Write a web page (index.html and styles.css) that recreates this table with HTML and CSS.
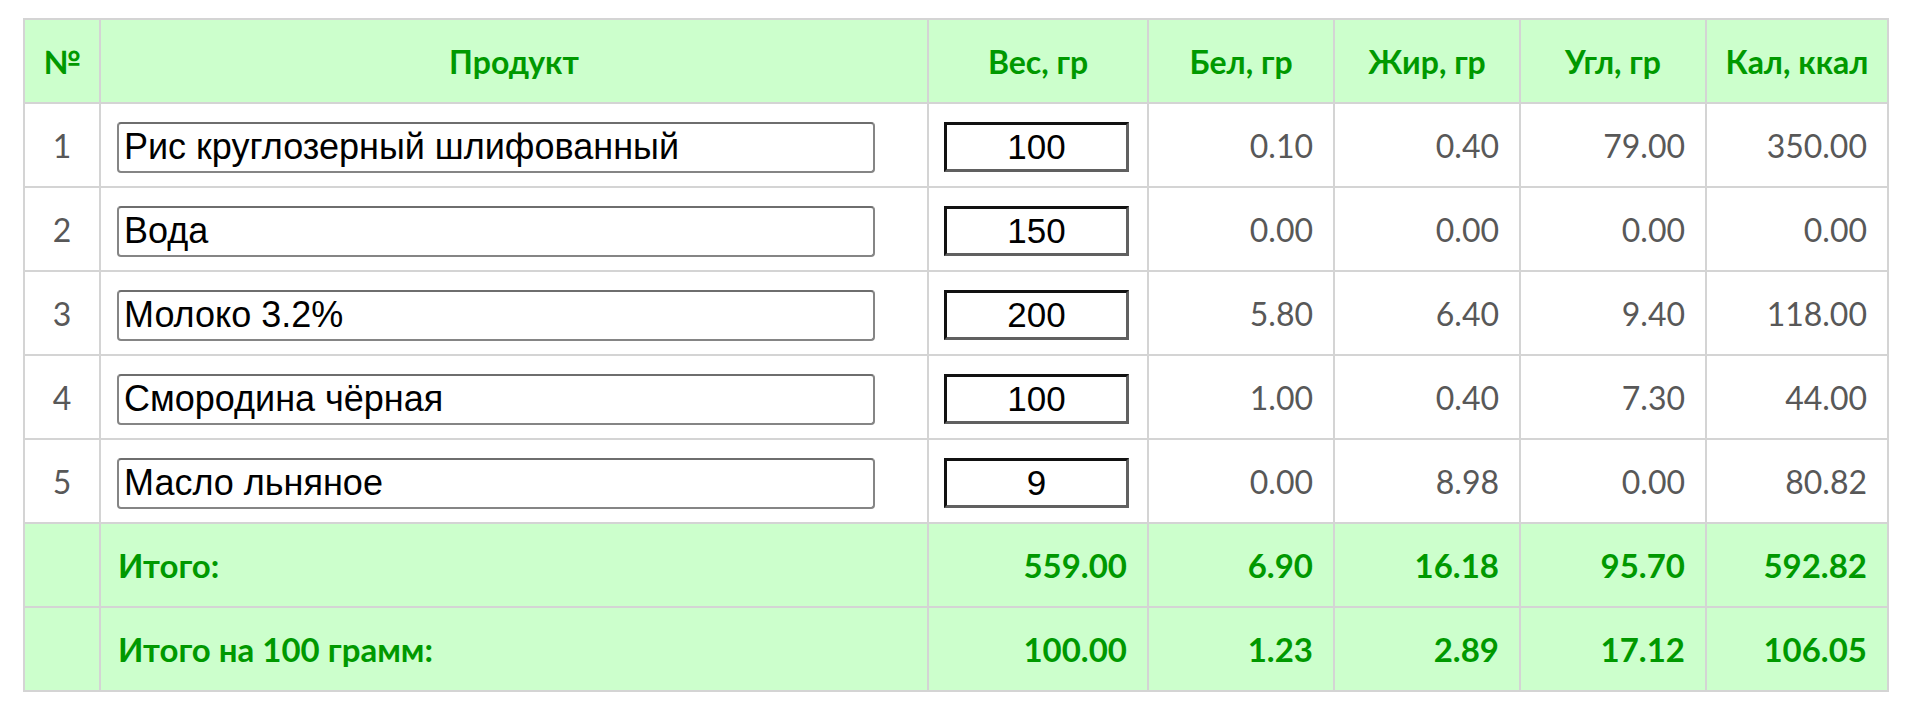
FILE: index.html
```html
<!DOCTYPE html>
<html lang="ru">
<head>
<meta charset="utf-8">
<title>Калькулятор калорийности</title>
<link rel="stylesheet" href="styles.css">
</head>
<body>
<table class="calc">
  <colgroup>
    <col class="c-num">
    <col class="c-prod">
    <col class="c-weight">
    <col class="c-val">
    <col class="c-val">
    <col class="c-val">
    <col class="c-last">
  </colgroup>
  <thead>
    <tr class="head">
      <th>№</th>
      <th>Продукт</th>
      <th>Вес, гр</th>
      <th>Бел, гр</th>
      <th>Жир, гр</th>
      <th>Угл, гр</th>
      <th>Кал, ккал</th>
    </tr>
  </thead>
  <tbody>
    <tr class="item">
      <td class="idx">1</td>
      <td class="prod"><input class="prod-input" type="text" value="Рис круглозерный шлифованный"></td>
      <td class="weight"><input class="weight-input" type="text" value="100"></td>
      <td class="num">0.10</td>
      <td class="num">0.40</td>
      <td class="num">79.00</td>
      <td class="num">350.00</td>
    </tr>
    <tr class="item">
      <td class="idx">2</td>
      <td class="prod"><input class="prod-input" type="text" value="Вода"></td>
      <td class="weight"><input class="weight-input" type="text" value="150"></td>
      <td class="num">0.00</td>
      <td class="num">0.00</td>
      <td class="num">0.00</td>
      <td class="num">0.00</td>
    </tr>
    <tr class="item">
      <td class="idx">3</td>
      <td class="prod"><input class="prod-input" type="text" value="Молоко 3.2%"></td>
      <td class="weight"><input class="weight-input" type="text" value="200"></td>
      <td class="num">5.80</td>
      <td class="num">6.40</td>
      <td class="num">9.40</td>
      <td class="num">118.00</td>
    </tr>
    <tr class="item">
      <td class="idx">4</td>
      <td class="prod"><input class="prod-input" type="text" value="Смородина чёрная"></td>
      <td class="weight"><input class="weight-input" type="text" value="100"></td>
      <td class="num">1.00</td>
      <td class="num">0.40</td>
      <td class="num">7.30</td>
      <td class="num">44.00</td>
    </tr>
    <tr class="item">
      <td class="idx">5</td>
      <td class="prod"><input class="prod-input" type="text" value="Масло льняное"></td>
      <td class="weight"><input class="weight-input" type="text" value="9"></td>
      <td class="num">0.00</td>
      <td class="num">8.98</td>
      <td class="num">0.00</td>
      <td class="num">80.82</td>
    </tr>
  </tbody>
  <tfoot>
    <tr class="total">
      <td></td>
      <td class="label">Итого:</td>
      <td class="num">559.00</td>
      <td class="num">6.90</td>
      <td class="num">16.18</td>
      <td class="num">95.70</td>
      <td class="num">592.82</td>
    </tr>
    <tr class="total">
      <td></td>
      <td class="label">Итого на 100 грамм:</td>
      <td class="num">100.00</td>
      <td class="num">1.23</td>
      <td class="num">2.89</td>
      <td class="num">17.12</td>
      <td class="num">106.05</td>
    </tr>
  </tfoot>
</table>
</body>
</html>
```

FILE: styles.css
```css
html, body {
  margin: 0;
  padding: 0;
  background: #ffffff;
}

body {
  padding: 18px 0 0 23px;
  font-family: Lato, "PT Sans", "Noto Sans", sans-serif;
}

.calc {
  table-layout: fixed;
  width: 1866px;
  border-collapse: separate;
  border-spacing: 2px;
  background: #d4d4d4;
}

.c-num { width: 74px; }
.c-prod { width: 826px; }
.c-weight { width: 218px; }
.c-val { width: 184px; }
.c-last { width: 180px; }

.calc tr {
  height: 82px;
}

.calc th,
.calc td {
  padding: 0;
  vertical-align: middle;
}

.head th {
  background: #ccffcc;
  color: #009900;
  font-weight: 700;
  font-size: 32px;
  text-align: center;
}

.item td {
  background: #ffffff;
  color: #585858;
  font-size: 32px;
}

.idx {
  text-align: center;
}

.num {
  text-align: right;
  padding-right: 20px !important;
}

.prod {
  padding-left: 16px !important;
}

.prod-input {
  box-sizing: border-box;
  width: 758px;
  height: 51px;
  margin: 4px 0 0 0;
  padding: 0 5px;
  border: 2px solid #858585;
  border-top-color: #6e6e6e;
  border-radius: 4px;
  background: #ffffff;
  color: #000000;
  font-family: "Liberation Sans", Arial, sans-serif;
  font-size: 36px;
  display: block;
}

.weight {
  text-align: center;
}

.weight-input {
  box-sizing: border-box;
  width: 185px;
  height: 50px;
  margin: 4px 0 0 -3px;
  padding: 0;
  border-style: solid;
  border-width: 3px;
  border-color: #111111 #606060 #606060 #111111;
  border-radius: 0;
  background: #ffffff;
  color: #000000;
  font-family: "Liberation Sans", Arial, sans-serif;
  font-size: 35px;
  text-align: center;
}

.total td {
  background: #ccffcc;
  color: #009900;
  font-weight: 700;
  font-size: 33px;
}

.label {
  padding-left: 17px !important;
}
```
